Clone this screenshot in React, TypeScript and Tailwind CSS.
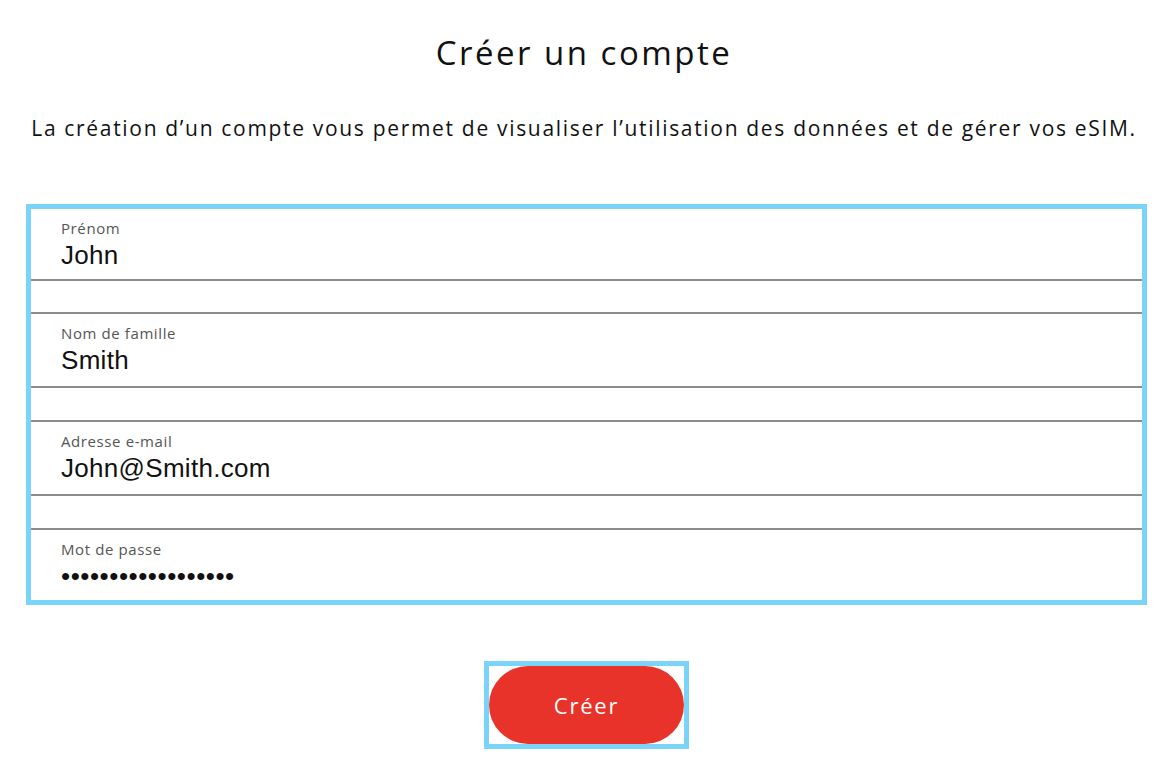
import React from 'react';

const fields = [
  { label: 'Prénom', value: 'John', type: 'text', h: 'h-[72px]' },
  { label: 'Nom de famille', value: 'Smith', type: 'text', h: 'h-[74px]' },
  { label: 'Adresse e-mail', value: 'John@Smith.com', type: 'email', h: 'h-[74px]' },
  { label: 'Mot de passe', value: 'johnsmithpassword1', type: 'password', h: 'h-[70px]' },
];

const spacers = ['h-[33px]', 'h-[34px]', 'h-[34px]'];

const heading = { fontFamily: '"Open Sans", "Noto Sans", sans-serif' };
const inputFont = { fontFamily: '"Liberation Sans", Arial, sans-serif' };

const App = () => {
  return (
    <div className="min-h-screen bg-white text-[#111]" style={heading}>
      <div className="flex flex-col items-center pt-[33px]">
        <h1 className="text-[33px] leading-[40px] tracking-[2.5px] font-normal">Créer un compte</h1>
        <p className="mt-[41px] text-[21px] leading-[28px] tracking-[1.68px] whitespace-nowrap">
          La création d’un compte vous permet de visualiser l’utilisation des données et de gérer vos eSIM.
        </p>
      </div>

      <form className="mt-[62px] ml-[26px] w-[1121px] border-[5px] border-[#7ad3f8] flex flex-col">
        {fields.map((field, i) => (
          <div key={field.label} className="flex flex-col">
            <label
              className={`${field.h} px-[30px] pt-[10px] flex flex-col ${
                i < fields.length - 1 ? 'border-b-2 border-[#8c8c8c]' : ''
              }`}
            >
              <span className="text-[15px] leading-[18px] tracking-[0.6px] text-[#555]">{field.label}</span>
              <input
                type={field.type}
                defaultValue={field.value}
                readOnly
                className={`mt-[3px] w-full bg-transparent p-0 text-[26px] leading-[30px] h-[30px] outline-none text-[#111] ${
                  field.type === 'password' ? 'tracking-[0.55px]' : 'tracking-[0.3px]'
                }`}
                style={inputFont}
              />
            </label>
            {i < fields.length - 1 && <div className={`${spacers[i]} border-b-2 border-[#8c8c8c]`} />}
          </div>
        ))}
      </form>

      <div className="flex justify-center mt-[56px]">
        <div className="ml-[5px] border-[5px] border-[#7ad3f8]">
          <button
            type="button"
            className="w-[195px] h-[78px] rounded-full bg-[#e8332a] text-white text-[22px] tracking-[1.8px] flex items-center justify-center"
          >
            Créer
          </button>
        </div>
      </div>
    </div>
  );
};

export default App;
